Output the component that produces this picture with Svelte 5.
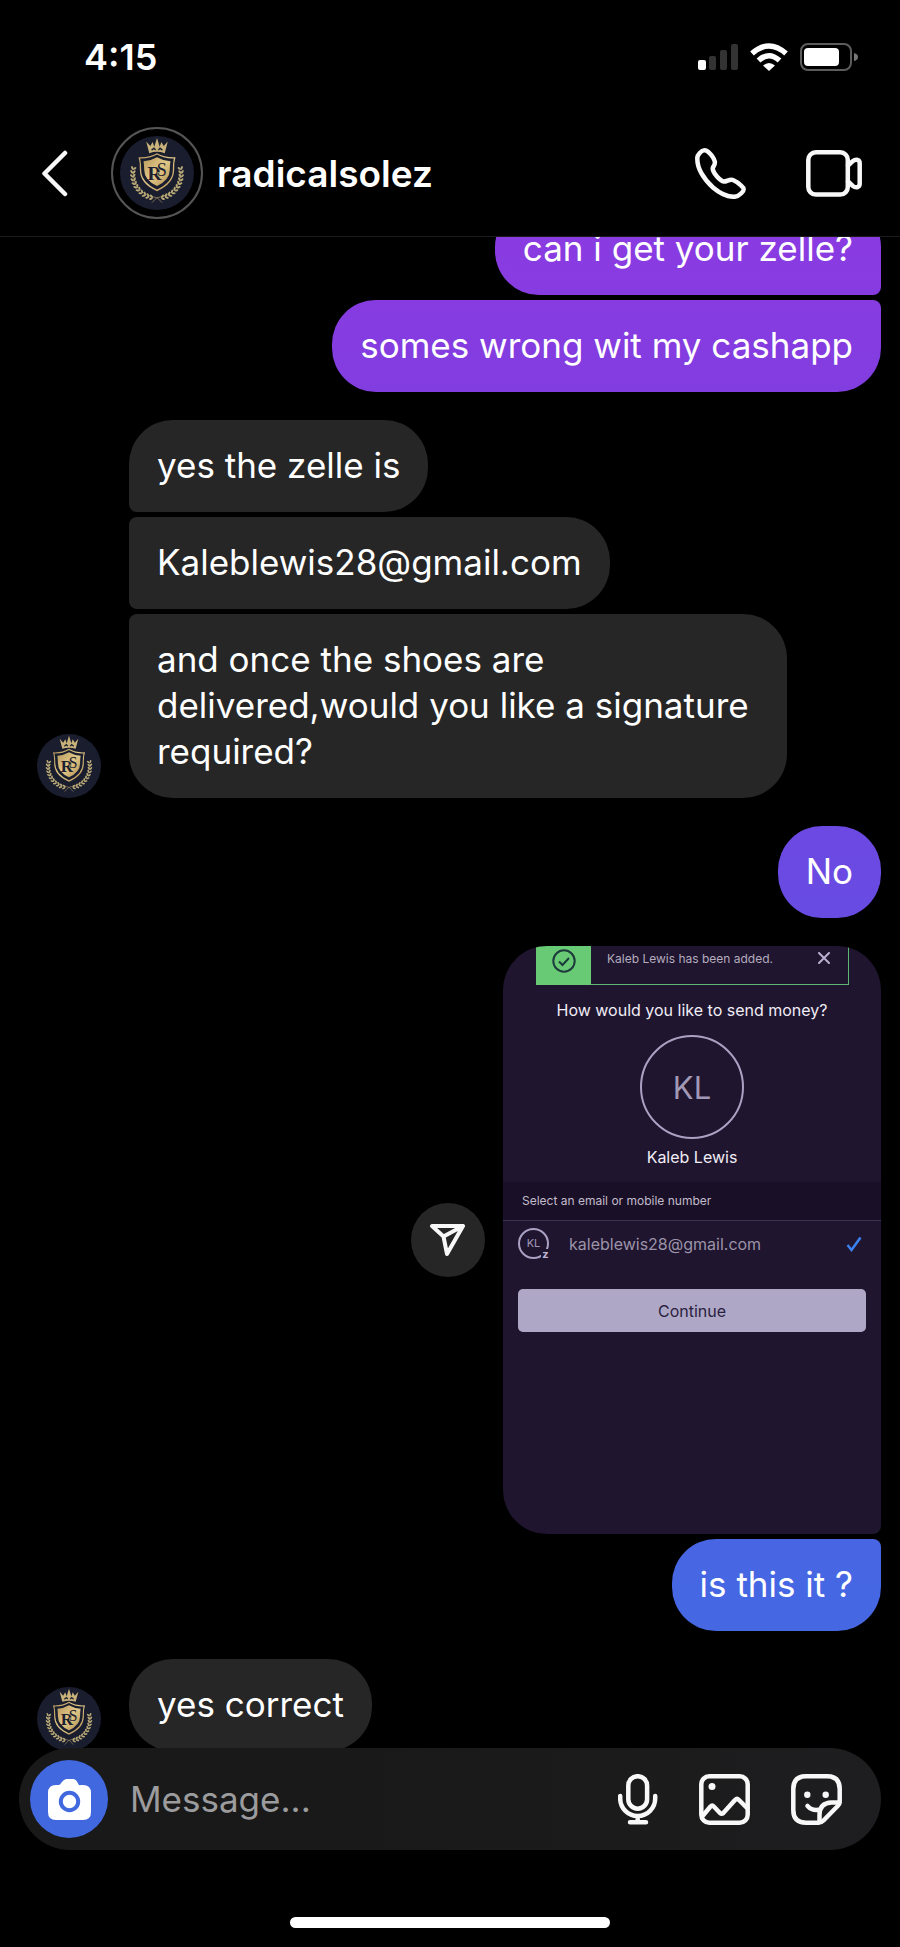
<script>
  let user = "radicalsolez";
  let message = $state("");

  let groups = [
    { mine: true, items: ["can i get your zelle?", "somes wrong wit my cashapp"] },
    {
      mine: false,
      items: [
        "yes the zelle is",
        "Kaleblewis28@gmail.com",
        "and once the shoes are delivered,would you like a signature required?",
      ],
    },
    { mine: true, items: ["No"] },
    { mine: true, photo: true, items: ["is this it ?"] },
    { mine: false, items: ["yes correct"] },
  ];

  // laurel branch: pairs of leaves along an arc around the shield
  let leaves = [];
  for (let i = 0; i < 11; i++) {
    let angle = 190 - i * 9;
    let rad = (angle * Math.PI) / 180;
    let x = 157 + 72 * Math.cos(rad);
    let y = 161 + 72 * Math.sin(rad);
    leaves.push({ x, y, turn: angle + 55 }, { x, y, turn: angle + 130 });
  }
</script>

{#snippet crest(id)}
  <svg class="crest" viewBox="47 48 220 220" aria-hidden="true">
    <defs>
      <linearGradient id={id} x1="0" y1="0" x2="1" y2="1">
        <stop offset="0" stop-color="#b8985a" />
        <stop offset="0.5" stop-color="#e2c98a" />
        <stop offset="1" stop-color="#b08c4a" />
      </linearGradient>
    </defs>
    <circle cx="157" cy="158" r="110" fill="#191d2e" />
    <path
      d="M134 99l-9-35 12 14 7-12 5 14 8-26 8 26 5-14 7 12 12-14-9 35q-23-8-46 0z"
      fill="#c9b27a"
    />
    <path d="M141 90l7-6 5 6M161 90l5-6 7 6" stroke="#191d2e" stroke-width="4" fill="none" />
    <path
      d="M102 111q31 2 55-12 24 14 55 12-5 15-4 38 0 40-51 63-51-23-51-63 1-23-4-38z"
      fill={`url(#${id})`}
    />
    <path
      d="M107 115q27 1 50-12 23 13 50 12-3 14-3 34 0 36-47 58-47-22-47-58 0-20-3-34z"
      fill="#191d2e"
    />
    <path
      d="M117 123q21-1 40-12 19 11 40 12-2 12-2 26 0 29-38 48-38-19-38-48 0-14-2-26z"
      fill={`url(#${id})`}
    />
    <g fill="#1d2030" font-family="'Liberation Serif', serif">
      <text x="129" y="180" font-size="58" font-weight="700">R</text>
      <text x="156" y="166" font-size="54" stroke="#d3b877" stroke-width="3" paint-order="stroke">S</text>
    </g>
    {#each [1, -1] as side}
      <g transform={side === 1 ? undefined : "translate(314 0) scale(-1 1)"}>
        <path d="M86 152q0 66 72 80l14 14" fill="none" stroke="#a89767" stroke-width="2" />
        {#each leaves as leaf}
          <ellipse
            cx="6"
            rx="6"
            ry="3"
            fill="#b9a977"
            transform="translate({leaf.x} {leaf.y}) rotate({leaf.turn})"
          />
        {/each}
      </g>
    {/each}
  </svg>
{/snippet}

{#snippet transfer()}
  <div class="photo-row">
    <button class="share" aria-label="Share">
      <svg width="36" height="34" viewBox="0 0 36 34">
        <path d="M2 3h31L17 31l-3.500-17.500z M13.500 13.500L33 3" />
      </svg>
    </button>
    <article class="transfer">
      <div class="banner">
        <span class="banner-mark">
          <svg width="24" height="24" viewBox="0 0 24 24">
            <circle cx="12" cy="12" r="10.700" />
            <path d="M7 12.500l3.500 3.500 6.500-7" />
          </svg>
        </span>
        <span class="banner-text">Kaleb Lewis has been added.</span>
        <button class="dismiss" aria-label="Dismiss">
          <svg width="12" height="12" viewBox="0 0 12 12"><path d="M1 1l10 10M11 1L1 11" /></svg>
        </button>
      </div>
      <h2>How would you like to send money?</h2>
      <div class="initials">KL</div>
      <p class="recipient">Kaleb Lewis</p>
      <p class="band">Select an email or mobile number</p>
      <div class="contact">
        <span class="contact-initials">KL<b>z</b></span>
        <span class="contact-mail">kaleblewis28@gmail.com</span>
        <svg width="16" height="16" viewBox="0 0 16 16"><path d="M1.500 9l4 5L14.500 1.500" /></svg>
      </div>
      <button class="continue">Continue</button>
    </article>
  </div>
{/snippet}

<div class="screen">
  <div class="status">
    <time>4:15</time>
    <div class="status-icons">
      <svg width="40" height="28" viewBox="0 0 40 28">
        <rect x="0" y="17" width="8" height="10" rx="2" fill="#fff" />
        <rect x="11" y="13" width="7" height="14" rx="2" fill="#333" />
        <rect x="22" y="7" width="7" height="20" rx="2" fill="#333" />
        <rect x="33" y="1" width="7" height="26" rx="2" fill="#333" />
      </svg>
      <svg width="38" height="28" viewBox="0 0 38 28" fill="none" stroke="#fff" stroke-width="5.500">
        <path d="M2 10.500Q19-4.500 36 10.500" />
        <path d="M8.500 17.500Q19 8 29.500 17.500" />
        <path d="M13 22.500Q19 17.500 25 22.500L19 28z" fill="#fff" stroke="none" />
      </svg>
      <svg width="58" height="28" viewBox="0 0 58 28">
        <rect x="1" y="1" width="50" height="26" rx="7" fill="none" stroke="#5c5c5c" stroke-width="2" />
        <rect x="4" y="5" width="35" height="18" rx="4" fill="#fff" />
        <path d="M54 10q4 1 4 4t-4 4z" fill="#777" />
      </svg>
    </div>
  </div>

  <header>
    <button class="back" aria-label="Back">
      <svg width="27" height="47" viewBox="0 0 27 47"><path d="M24 3L3.500 23.500 24 44" /></svg>
    </button>
    <a class="ring" href="#profile" aria-label={user}>{@render crest("gold-header")}</a>
    <h1>{user}</h1>
    <button aria-label="Audio call">
      <svg width="51" height="51" viewBox="0 0 51 51">
        <path
          d="M8.700 2.400C6.500 2.800 2.500 6.500 2.400 9.500C1.500 20 9 31.500 18 39.500C25 45.500 32 48.800 39 48.800C43 48.800 44 47.500 46.500 45C49.500 42 49.500 40.500 46 37.500C43.500 35 41.500 33.500 38 32C35 30.500 32 33.600 29 33.600C25 32.800 18 25 17.700 20.500C17.800 18.500 20.500 17 19.800 13.500C19 10.500 15.500 6 13 3.700C11.500 2.400 10.300 2 8.700 2.400z"
        />
      </svg>
    </button>
    <button aria-label="Video call">
      <svg width="56" height="47" viewBox="0 0 56 47">
        <rect x="2.300" y="2.300" width="39.500" height="42.200" rx="7.500" />
        <path d="M42 15.500l4.500-4.200q3-2.300 5-1.400 2.200.8 2.200 3.300v20.600q0 2.500-2.200 3.300-2 .9-5-1.400L42 31.500" />
      </svg>
    </button>
  </header>

  <main>
    {#each groups as group, g}
      <section class="group" class:mine={group.mine}>
        {#if !group.mine}
          <div class="avatar">{@render crest("gold-" + g)}</div>
        {/if}
        <div class="stack">
          {#if group.photo}
            {@render transfer()}
          {/if}
          {#each group.items as text, i}
            <p
              class="bubble"
              class:joined-top={i > 0 || group.photo}
              class:joined-bottom={i < group.items.length - 1}
            >
              {text}
            </p>
          {/each}
        </div>
      </section>
    {/each}
  </main>

  <form class="composer" onsubmit={(e) => e.preventDefault()}>
    <button class="camera" type="button" aria-label="Camera">
      <svg width="43" height="41" viewBox="0 0 43 41">
        <path
          d="M8 6h2.500Q12 6 13.500 3.500T18 0h7q3 0 4.500 3.500T32.500 6H35q8 0 8 8v19q0 8-8 8H8q-8 0-8-8V14Q0 6 8 6z"
          fill="#fff"
        />
        <circle cx="21.500" cy="22.500" r="8.700" fill="#fff" stroke="#4168df" stroke-width="4" />
      </svg>
    </button>
    <input type="text" placeholder="Message..." aria-label="Message" bind:value={message} />
    <button type="button" aria-label="Voice message">
      <svg width="40" height="51" viewBox="0 0 40 51">
        <rect x="10.300" y="2.200" width="18.800" height="32.500" rx="9.400" />
        <path d="M2.200 22v2.500a17.500 17.500 0 0 0 35 0V22M19.700 42.500v5.500M12 48.300h16" />
      </svg>
    </button>
    <button type="button" aria-label="Photo">
      <svg width="51" height="51" viewBox="0 0 51 51">
        <rect x="2.300" y="2.300" width="46.400" height="46.400" rx="8" />
        <path d="M4 41.500l7.500-9q1.700-1.800 3.300 0l6.200 6.500q1.700 1.500 3.300 0L36 26q2-2 4 0l8 8" />
        <circle class="solid" cx="13" cy="12.500" r="3.500" />
      </svg>
    </button>
    <button type="button" aria-label="Sticker">
      <svg width="51" height="51" viewBox="0 0 51 51">
        <path
          d="M15 2.300h21q12.700 0 12.700 12.700v12q0 3-2 5L32.500 46.500q-2.200 2.200-5 2.200H15Q2.300 48.700 2.300 36V15Q2.300 2.300 15 2.300z"
        />
        <path d="M28.500 48v-7q0-12 12-12.500h8M16.500 32q5 5.500 12.500 3.500" />
        <circle class="solid" cx="16.300" cy="20.700" r="3.200" />
        <circle class="solid" cx="34.700" cy="20.700" r="3.200" />
      </svg>
    </button>
  </form>
  <div class="home-bar"></div>
</div>

<style>
  :global(body) {
    margin: 0;
    background: #000;
  }
  .screen {
    display: flex;
    flex-direction: column;
    height: 100vh;
    overflow: hidden;
    background: #000;
    color: #fff;
    font-family: Inter, "Liberation Sans", sans-serif;
  }
  button {
    flex: none;
    display: flex;
    align-items: center;
    justify-content: center;
    margin: 0;
    padding: 0;
    border: 0;
    background: none;
    color: inherit;
    font: inherit;
    cursor: pointer;
  }
  svg {
    display: block;
    flex: none;
  }
  h1,
  h2,
  p {
    margin: 0;
    font-weight: 400;
  }
  button svg {
    fill: none;
    stroke: #f8f8f8;
    stroke-width: 4.5;
    stroke-linecap: round;
    stroke-linejoin: round;
  }
  button svg .solid {
    fill: #f8f8f8;
    stroke: none;
  }

  .status {
    display: flex;
    align-items: center;
    justify-content: space-between;
    padding: 34px 42px 0 84px;
    line-height: 46px;
  }
  .status time {
    font-size: 36px;
    font-weight: 600;
  }
  .status-icons {
    display: flex;
    gap: 12px;
  }

  header {
    display: flex;
    align-items: center;
    padding: 47px 38px 17px 41px;
    border-bottom: 1px solid #1a1a1a;
  }
  .ring {
    flex: none;
    box-sizing: border-box;
    width: 92px;
    height: 92px;
    margin-left: 43px;
    padding: 7px;
    border: 2px solid #555;
    border-radius: 50%;
  }
  .crest {
    width: 100%;
    height: 100%;
  }
  h1 {
    flex: 1;
    margin-left: 14px;
    padding-top: 2px;
    font-size: 37px;
    font-weight: 600;
    line-height: 46px;
  }
  header button + button {
    margin-left: 60px;
  }

  main {
    flex: 1;
    min-height: 0;
    display: flex;
    flex-direction: column;
    justify-content: flex-end;
    gap: 28px;
    padding: 0 19px 0 37px;
    overflow: hidden;
  }
  .group {
    flex: none;
    display: flex;
    align-items: flex-end;
    gap: 28px;
  }
  .mine {
    justify-content: flex-end;
  }
  .avatar {
    flex: none;
    width: 64px;
    height: 64px;
  }
  .stack {
    display: flex;
    flex-direction: column;
    align-items: flex-start;
    gap: 5px;
  }
  .mine .stack {
    align-items: flex-end;
  }
  .bubble {
    box-sizing: border-box;
    max-width: 658px;
    padding: 22px 28px 24px;
    border-radius: 44px;
    background: #262626;
    font-size: 35px;
    line-height: 46px;
  }
  .mine .bubble {
    background: linear-gradient(#9538e4 0, #823de0 390px, #6a4ae2 870px, #4667e3 1585px, #3f6ae0 100%) fixed;
  }
  .joined-top {
    border-top-left-radius: 8px;
  }
  .joined-bottom {
    border-bottom-left-radius: 8px;
  }
  .mine .joined-top {
    border-top-left-radius: 44px;
    border-top-right-radius: 8px;
  }
  .mine .joined-bottom {
    border-bottom-left-radius: 44px;
    border-bottom-right-radius: 8px;
  }

  .photo-row {
    display: flex;
    align-items: center;
    gap: 18px;
  }
  .share {
    width: 74px;
    height: 74px;
    border-radius: 50%;
    background: #262626;
  }
  .share svg {
    stroke-width: 4;
  }
  .transfer {
    width: 378px;
    padding-bottom: 202px;
    border-radius: 44px 44px 8px 44px;
    overflow: hidden;
    background: #1f152f;
    text-align: center;
  }
  .banner {
    box-sizing: border-box;
    display: flex;
    height: 39px;
    margin: 0 32px 0 33px;
    border-right: 1px solid #5cb872;
    border-bottom: 1px solid #5cb872;
    color: #b4acbe;
    font-size: 12px;
    line-height: 26px;
  }
  .banner-mark {
    width: 55px;
    height: 39px;
    padding-top: 3px;
    box-sizing: border-box;
    background: #68ca74;
  }
  .banner-mark svg {
    margin: 0 auto;
    fill: none;
    stroke: #1d3a3c;
    stroke-width: 2;
  }
  .banner-text {
    flex: 1;
    padding-left: 16px;
    text-align: left;
    white-space: nowrap;
  }
  .dismiss {
    height: 24px;
    margin-right: 18px;
  }
  .dismiss svg {
    stroke: #b9afce;
    stroke-width: 2;
  }
  h2,
  .recipient {
    margin-top: 13px;
    color: #f1edf6;
    font-size: 16px;
    line-height: 24px;
  }
  .initials {
    box-sizing: border-box;
    width: 104px;
    height: 104px;
    margin: 13px auto 0;
    border: 2px solid #aba1c2;
    border-radius: 50%;
    color: #a198b5;
    font-size: 31px;
    line-height: 102px;
  }
  .recipient {
    margin-top: 6px;
  }
  .band {
    margin-top: 13px;
    padding-left: 19px;
    border-bottom: 1px solid #3b3150;
    background: #190f27;
    color: #c3bccb;
    font-size: 12px;
    line-height: 38px;
    text-align: left;
  }
  .contact {
    display: flex;
    align-items: center;
    padding: 7px 19px 0 15px;
  }
  .contact-initials {
    position: relative;
    box-sizing: border-box;
    width: 31px;
    height: 31px;
    border: 2px solid #aba1c2;
    border-radius: 50%;
    color: #a198b5;
    font-size: 11px;
    line-height: 27px;
  }
  .contact-initials b {
    position: absolute;
    right: -3px;
    bottom: -3px;
    width: 9px;
    background: #1f152f;
    color: #c0b7d4;
    line-height: 11px;
  }
  .contact-mail {
    flex: 1;
    padding-left: 20px;
    color: #9c93a8;
    font-size: 16px;
    text-align: left;
  }
  .contact svg {
    fill: none;
    stroke: #3b82f0;
    stroke-width: 2.5;
  }
  .continue {
    width: calc(100% - 30px);
    height: 43px;
    margin: 30px 15px 0;
    border-radius: 5px;
    background: #aea8c6;
    color: #2a2140;
    font-size: 16px;
  }

  .composer {
    position: relative;
    flex: none;
    display: flex;
    align-items: center;
    gap: 41px;
    box-sizing: border-box;
    height: 102px;
    margin: -3px 19px 0;
    padding: 0 39px 0 11px;
    border-radius: 51px;
    background: linear-gradient(90deg, #191919 40%, #1e1d1f);
  }
  .camera {
    width: 78px;
    height: 78px;
    margin-right: -19px;
    border-radius: 50%;
    background: #4168df;
  }
  .camera svg {
    stroke: none;
  }
  input {
    flex: 1;
    min-width: 0;
    padding: 0;
    border: 0;
    outline: 0;
    background: none;
    color: #fff;
    font: inherit;
    font-size: 35px;
    line-height: 46px;
  }
  input::placeholder {
    color: #9c9c9e;
    opacity: 1;
  }
  .home-bar {
    flex: none;
    width: 320px;
    height: 11px;
    margin: 67px auto 19px;
    border-radius: 6px;
    background: #fff;
  }
</style>
